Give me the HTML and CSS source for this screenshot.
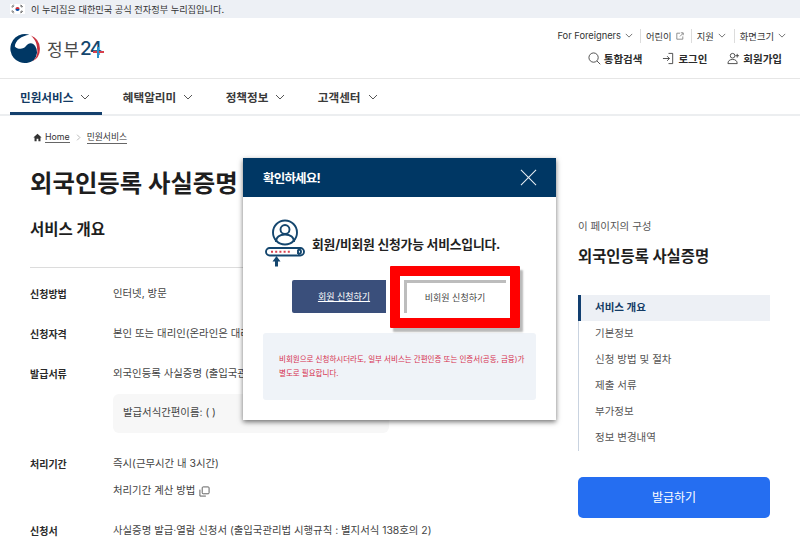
FILE: index.html
```html
<!DOCTYPE html>
<html lang="ko">

<head>
  <meta charset="UTF-8">
  <title>외국인등록 사실증명 | 정부24</title>
  <link rel="stylesheet" href="styles.css">
</head>

<body>

  <div class="gov-bar">
    <svg class="flag" viewBox="0 0 15 10">
      <rect width="15" height="10" fill="#fff"/>
      <path d="M5.400 5a2.100 2.100 0 0 1 4.200 0z" fill="#cd2e3a"/>
      <path d="M5.400 5a2.100 2.100 0 0 0 4.200 0z" fill="#0047a0"/>
      <path d="M1.500 2.800l2-1.800M2.200 3.400l2-1.800M10.800 1l2 1.800M10.100 1.600l2 1.800M1.500 7.200l2 1.800M2.200 6.600l2 1.800M10.800 9l2-1.800M10.100 8.400l2-1.800" stroke="#222" stroke-width=".7"/>
    </svg>
    <span>이 누리집은 대한민국 공식 전자정부 누리집입니다.</span>
  </div>

  <header class="header">
    <a class="logo">
      <svg class="logo-mark" viewBox="0 0 32 32">
        <path d="M21 1.800A15 15 0 1 0 25.500 28A11.500 11.500 0 0 0 27 13.500C25 9.500 20 9.500 17.500 13.500C15 17.500 8.500 17 6 14C6.500 7.500 13 3 21 1.800z" fill="#003764"/>
        <path d="M22 2.200A15 15 0 0 1 24 29.500A14 14 0 0 0 29 16C29 10 26 5 22 2.200z" fill="#c8313e"/>
      </svg>
      <span class="logo-name">정부</span><span class="logo-num">24<i class="logo-plus"></i></span>
    </a>
    <div class="header-right">
      <ul class="util">
        <li>For Foreigners <svg class="chev-s" viewBox="0 0 10 6"><path d="M1 1l4 4 4-4"/></svg></li>
        <li>어린이 <svg class="ext" viewBox="0 0 10 10"><path d="M5 1.500H1v7.500h7.500V5.500M5 5.500l4-4M6 1h3v3"/></svg></li>
        <li>지원 <svg class="chev-s" viewBox="0 0 10 6"><path d="M1 1l4 4 4-4"/></svg></li>
        <li>화면크기 <svg class="chev-s" viewBox="0 0 10 6"><path d="M1 1l4 4 4-4"/></svg></li>
      </ul>
      <ul class="account">
        <li>
          <svg class="acc-icon" viewBox="0 0 14 14"><circle cx="6" cy="6" r="5"/><path d="M9.700 9.700l3.500 3.500"/></svg>
          통합검색
        </li>
        <li>
          <svg class="acc-icon" viewBox="0 0 14 14"><path d="M1 7h7M5.500 4.500L8 7l-2.500 2.500M7 1.500h4.500v11H7"/></svg>
          로그인
        </li>
        <li>
          <svg class="acc-icon" viewBox="0 0 14 14"><circle cx="6" cy="4" r="2.500"/><path d="M1 12.500c0-3 2-4.500 5-4.500s5 1.500 5 4.500zM11 2v4M9 4h4"/></svg>
          회원가입
        </li>
      </ul>
    </div>
  </header>

  <nav class="gnb">
    <a class="gnb-item active">민원서비스 <svg class="chev" viewBox="0 0 10 6"><path d="M1 1l4 4 4-4"/></svg></a>
    <a class="gnb-item">혜택알리미 <svg class="chev" viewBox="0 0 10 6"><path d="M1 1l4 4 4-4"/></svg></a>
    <a class="gnb-item">정책정보 <svg class="chev" viewBox="0 0 10 6"><path d="M1 1l4 4 4-4"/></svg></a>
    <a class="gnb-item">고객센터 <svg class="chev" viewBox="0 0 10 6"><path d="M1 1l4 4 4-4"/></svg></a>
  </nav>

  <div class="crumbs">
    <svg class="home" viewBox="0 0 10 10"><path d="M5 .8L.4 5h1.300v4.200h2.300V6.500h2v2.700h2.300V5h1.300z"/></svg>
    <a>Home</a>
    <svg class="crumb-sep" viewBox="0 0 6 10"><path d="M1 1l4 4-4 4"/></svg>
    <a>민원서비스</a>
  </div>

  <div class="page">
    <main class="content">
      <h1>외국인등록 사실증명</h1>
      <h2>서비스 개요</h2>
      <dl class="info">
        <div class="info-row">
          <dt>신청방법</dt>
          <dd>인터넷, 방문</dd>
        </div>
        <div class="info-row">
          <dt>신청자격</dt>
          <dd>본인 또는 대리인(온라인은 대리 신청 불가)</dd>
        </div>
        <div class="info-row">
          <dt>발급서류</dt>
          <dd>
            외국인등록 사실증명 (출입국관리
            <div class="note">발급서식간편이름: ( )</div>
          </dd>
        </div>
        <div class="info-row">
          <dt>처리기간</dt>
          <dd>
            즉시(근무시간 내 3시간)
            <p class="calc-link">처리기간 계산 방법
              <svg class="copy" viewBox="0 0 12 12"><rect x="3.500" y="1" width="7.500" height="7.500" rx="1"/><path d="M1 4v7h6.500"/></svg>
            </p>
          </dd>
        </div>
        <div class="info-row">
          <dt>신청서</dt>
          <dd>사실증명 발급·열람 신청서 (출입국관리법 시행규칙 : 별지서식 138호의 2)</dd>
        </div>
      </dl>
    </main>

    <aside class="side">
      <p class="side-label">이 페이지의 구성</p>
      <h3>외국인등록 사실증명</h3>
      <ul class="toc">
        <li class="on">서비스 개요</li>
        <li>기본정보</li>
        <li>신청 방법 및 절차</li>
        <li>제출 서류</li>
        <li>부가정보</li>
        <li>정보 변경내역</li>
      </ul>
      <a class="apply">발급하기</a>
    </aside>
  </div>

  <div class="modal">
    <div class="modal-head">
      <strong>확인하세요!</strong>
      <svg class="modal-close" viewBox="0 0 18 18"><path d="M1 1l16 16M17 1L1 17"/></svg>
    </div>
    <div class="modal-body">
      <div class="modal-msg">
        <svg class="modal-icon" viewBox="0 0 40 48">
          <circle cx="20" cy="13.500" r="12"/>
          <circle cx="20" cy="10.500" r="4.500"/>
          <path d="M11 23c0-5 4-7.500 9-7.500s9 2.500 9 7.500"/>
          <rect x="1" y="29" width="38" height="7.500" rx="3.700"/>
          <path class="dots" d="M6 32.800h20"/>
          <path d="M33 30.500v4.500M33 30.500c2 0 3 1 3 2.200s-1 2.300-3 2.300"/>
          <path class="fill" d="M10 47.500v-5H7.500l4-5.500 4 5.500H13v5z"/>
        </svg>
        <p>회원/비회원 신청가능 서비스입니다.</p>
      </div>
      <div class="modal-btns">
        <a class="btn-member">회원 신청하기</a>
        <a class="btn-guest">비회원 신청하기</a>
      </div>
      <div class="modal-note">비회원으로 신청하시더라도, 일부 서비스는 간편인증 또는 인증서(공동, 금융)가<br>별도로 필요합니다.</div>
    </div>
  </div>

</body>

</html>
```

FILE: styles.css
```css
* {
  box-sizing: border-box;
}

html,
body {
  height: 543px;
  overflow: hidden;
}

body {
  margin: 0;
  position: relative;
  font-family: Inter, "Noto Sans CJK KR", sans-serif;
  color: #2a2a2a;
  background-color: #ffffff;
}

ul,
dl,
dd,
p,
h1,
h2,
h3 {
  margin: 0;
  padding: 0;
}

ul {
  list-style: none;
}

/* GOV BAR */

.gov-bar {
  display: flex;
  align-items: center;
  gap: 6px;
  height: 18px;
  padding-left: 10px;
  font-size: 9.200px;
  color: #333;
  background-color: #edf0f5;
}

.flag {
  width: 15px;
  height: 10px;
}

/* HEADER */

.header {
  display: flex;
  justify-content: space-between;
  height: 61px;
  border-bottom: 1px solid #e6e6e6;
}

.logo {
  display: flex;
  align-items: center;
  padding-left: 9px;
}

.logo-mark {
  width: 31px;
  height: 31px;
  margin-right: 7px;
}

.logo-name {
  font-size: 17px;
  letter-spacing: .8px;
  color: #4a4a4a;
}

.logo-num {
  position: relative;
  font-size: 19px;
  font-weight: 500;
  letter-spacing: -1.500px;
  color: #14466e;
}

.logo-plus {
  position: absolute;
  right: -3px;
  top: 14px;
  z-index: 1;
  width: 11px;
  height: 2px;
  background-color: #d8404c;
}

.logo-plus::after {
  content: "";
  position: absolute;
  left: 4px;
  top: -4px;
  width: 2px;
  height: 11px;
  background-color: #2b8fc9;
}

.header-right {
  display: flex;
  flex-direction: column;
  align-items: flex-end;
  padding: 10px 14px 0 0;
}

.util {
  display: flex;
  align-items: center;
  height: 15px;
  font-size: 9.300px;
  color: #333;
}

.util li {
  display: flex;
  align-items: center;
  gap: 4px;
  padding: 0 8px 0 5px;
  border-left: 1px solid #dcdcdc;
}

.util li:nth-child(-n+2) {
  padding-right: 7px;
}

.util li:first-child {
  border-left: 0;
}

.util li:last-child {
  padding-right: 0;
}

.chev-s,
.chev {
  fill: none;
  stroke: #555;
  stroke-width: 1;
}

.chev-s {
  width: 8px;
  height: 5px;
}

.ext {
  width: 8px;
  height: 8px;
  fill: none;
  stroke: #777;
  stroke-width: 1;
}

.account {
  display: flex;
  gap: 20px;
  margin: 8px 4px 0 0;
  font-size: 10.500px;
  font-weight: 700;
  color: #2b2b2b;
}

.account li {
  display: flex;
  align-items: center;
  gap: 3px;
}

.acc-icon {
  width: 13px;
  height: 13px;
  fill: none;
  stroke: #333;
  stroke-width: .9;
}

/* GNB */

.gnb {
  display: flex;
  height: 37px;
  padding-left: 10px;
  gap: 10.500px;
  background-color: #fff;
  border-bottom: 2px solid #eceef0;
}

.gnb-item {
  display: flex;
  align-items: center;
  gap: 7px;
  height: 36px;
  padding: 2px 12px 0 10px;
  font-size: 11.600px;
  font-weight: 700;
  color: #3a3a3a;
  border-bottom: 3px solid transparent;
}

.gnb-item.active {
  color: #123a64;
  border-bottom-color: #14406d;
}

.chev {
  width: 10px;
  height: 6px;
}

/* BREADCRUMB */

.crumbs {
  display: flex;
  align-items: center;
  gap: 3px;
  height: 16px;
  margin: 13px 0 0 33px;
  font-size: 8.800px;
  color: #333;
}

.crumbs a {
  border-bottom: 1px solid #666;
}

.home {
  width: 9px;
  height: 9px;
  fill: #333;
}

.crumb-sep {
  width: 5px;
  height: 7px;
  margin: 0 3px;
  fill: none;
  stroke: #999;
}

/* PAGE */

.page {
  display: grid;
  grid-template-columns: 490px 192px;
  column-gap: 58px;
  padding-left: 30px;
}

.content h1 {
  margin-top: 20px;
  font-size: 24.400px;
  line-height: 36px;
  font-weight: 700;
  color: #1e1e1e;
}

.content h2 {
  margin-top: 17px;
  font-size: 15.500px;
  line-height: 24px;
  font-weight: 700;
  color: #1e1e1e;
}

.info {
  margin-top: 25px;
  padding-top: 17px;
  border-top: 1px solid #dcdcdc;
  font-size: 10.400px;
  line-height: 18px;
}

.info-row {
  display: grid;
  grid-template-columns: 83px 1fr;
  margin-bottom: 22px;
}

.info-row dt {
  font-size: 10px;
  font-weight: 700;
  color: #2a2a2a;
}

.info-row dd {
  color: #444;
  white-space: nowrap;
}

.note {
  width: 276px;
  height: 39px;
  margin-top: 11px;
  padding: 10px;
  background-color: #f7f7f7;
  border-radius: 6px;
}

.calc-link {
  display: flex;
  align-items: center;
  gap: 4px;
  margin-top: 9px;
}

.copy {
  width: 11px;
  height: 11px;
  fill: none;
  stroke: #555;
}

/* SIDE */

.side {
  padding-top: 74px;
}

.side-label {
  font-size: 10.500px;
  line-height: 16px;
  color: #555;
}

.side h3 {
  margin-top: 11px;
  font-size: 15.400px;
  line-height: 22px;
  font-weight: 700;
  color: #1e1e1e;
}

.toc {
  margin-top: 27px;
  border-left: 1px solid #c9d3e0;
  font-size: 10.500px;
  color: #555;
}

.toc li {
  height: 26px;
  line-height: 26px;
  padding-left: 16px;
}

.toc .on {
  margin-left: -1px;
  font-weight: 700;
  color: #123a64;
  background-color: #edf0f5;
  border-left: 3px solid #123f70;
  padding-left: 14px;
}

.apply {
  display: block;
  height: 41px;
  margin-top: 26px;
  line-height: 41px;
  text-align: center;
  font-size: 12px;
  color: #fff;
  background-color: #256ef1;
  border-radius: 5px;
}

/* MODAL */

.modal {
  position: absolute;
  left: 243px;
  top: 158px;
  width: 313px;
  height: 262px;
  background-color: #fff;
  box-shadow: 0 2px 5px rgba(0, 0, 0, .55);
}

.modal-head {
  display: flex;
  align-items: center;
  justify-content: space-between;
  height: 39px;
  padding: 0 19px 0 20px;
  background-color: #003764;
  color: #fff;
  font-size: 12.500px;
  letter-spacing: -.8px;
}

.modal-close {
  width: 17px;
  height: 17px;
  fill: none;
  stroke: #e8eef4;
  stroke-width: 1.100;
}

.modal-body {
  padding: 22px 20px 0;
}

.modal-msg {
  display: flex;
  align-items: center;
  gap: 7px;
  margin-left: 2px;
}

.modal-icon {
  width: 40px;
  height: 48px;
  fill: none;
  stroke: #14466e;
  stroke-width: 1.900;
}

.modal-icon .dots {
  stroke: #d8404c;
  stroke-width: 2;
  stroke-dasharray: 2 2.200;
}

.modal-icon .fill {
  fill: #14466e;
  stroke: none;
}

.modal-msg p {
  font-size: 12.800px;
  font-weight: 700;
  color: #222;
  letter-spacing: -.2px;
}

.modal-btns {
  position: relative;
  display: flex;
  gap: 18px;
  margin: 13px 0 0 29px;
}

.btn-member,
.btn-guest {
  display: block;
  height: 33px;
  line-height: 33px;
  text-align: center;
  font-size: 9px;
}

.btn-member {
  width: 94px;
  padding-left: 10px;
  color: #fff;
  text-decoration: underline;
  background-color: #3a4f7b;
  border-radius: 2px 0 0 2px;
}

.btn-guest {
  position: relative;
  width: 102px;
  padding-right: 3px;
  color: #444;
  background-color: #fff;
  border-top: 3px solid #bdbdbd;
  border-left: 3px solid #bdbdbd;
  line-height: 29px;
}

/* red highlight drawn over the button */
.btn-guest::after {
  content: "";
  box-sizing: border-box;
  position: absolute;
  left: -17px;
  top: -17px;
  width: 130px;
  height: 62px;
  border: 10px solid #ff0000;
  border-radius: 1px;
  box-shadow: 3px 4px 2px #b9b9b9;
}

.modal-note {
  height: 67px;
  margin-top: 20px;
  padding: 20px 16px 0;
  font-size: 7.500px;
  line-height: 14px;
  white-space: nowrap;
  color: #d6304f;
  background-color: #eff3f8;
  border-radius: 3px;
}
```
